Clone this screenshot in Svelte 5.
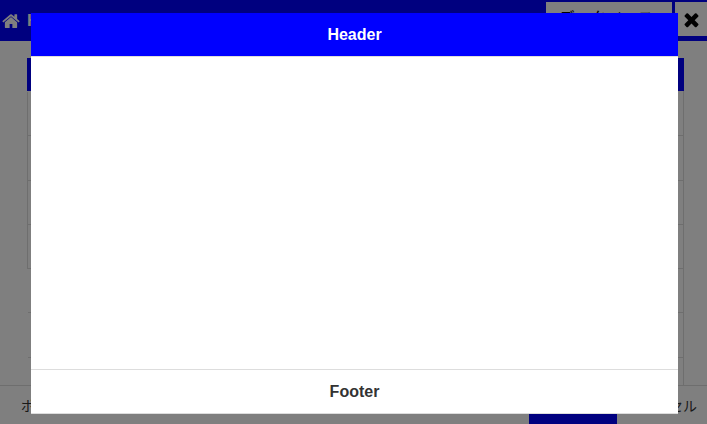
<script>
	const rows = [1, 2, 3, 4, 5, 6];
</script>

<div class="page">
	<div class="topbar">
		<svg class="home" viewBox="0 128 1664 1408" aria-hidden="true">
			<path d="M1408 992v480q0 26-19 45t-45 19h-384v-384h-256v384h-384q-26 0-45-19t-19-45v-480q0-1 .5-3t.5-3l575-474 575 474q1 2 1 6zm223-69l-62 74q-8 9-21 11h-3q-13 0-21-7l-692-577-692 577q-12 8-24 7-13-2-21-11l-62-74q-8-10-7-23.500t11-21.500l719-599q32-26 76-26t76 26l244 204v-195q0-14 9-23t23-9h192q14 0 23 9t9 23v408l219 182q10 8 11 21.500t-7 23.500z" />
		</svg>
		<span class="title">Home</span>
		<button class="group">データベース</button>
		<button class="close" aria-label="閉じる">
			<svg viewBox="0 0 1408 1792" aria-hidden="true">
				<path d="M1298 1322q0 40-28 68l-136 136q-28 28-68 28t-68-28l-294-294-294 294q-28 28-68 28t-68-28l-136-136q-28-28-28-68t28-68l294-294-294-294q-28-28-28-68t28-68l136-136q28-28 68-28t68 28l294 294 294-294q28-28 68-28t68 28l136 136q28 28 28 68t-28 68l-294 294 294 294q28 28 28 68z" />
			</svg>
		</button>
	</div>

	<div class="content">
		<div class="table">
			<div class="thead"></div>
			{#each rows as row}
				<div class="row" class:short={row > 4}></div>
			{/each}
		</div>
	</div>

	<div class="footer">
		<span class="note">ポイント</span>
		<button class="primary">OK</button>
		<span class="cancel">キャンセル</span>
	</div>
</div>

<div class="overlay">
	<div class="modal">
		<div class="modal-header">Header</div>
		<div class="modal-body"></div>
		<div class="modal-footer">Footer</div>
	</div>
</div>

<style>
	:global(body) {
		margin: 0;
		overflow: hidden;
		font-family: "Liberation Sans", "Noto Sans CJK JP", sans-serif;
	}

	.page {
		display: flex;
		flex-direction: column;
		height: 424px;
		background: #fff;
		color: #333;
	}

	/* Top bar */
	.topbar {
		display: flex;
		align-items: flex-start;
		height: 41px;
		flex: none;
		box-sizing: border-box;
		padding-top: 2px;
		background: #00f;
	}

	.home {
		width: 18px;
		height: 15px;
		margin: 11px 0 0 2px;
		fill: #fff;
		flex: none;
	}

	.title {
		margin: 9px 0 0 7px;
		font-size: 17px;
		font-weight: bold;
		color: #fff;
	}

	.topbar button {
		border: 0;
		padding: 0;
		background: #fff;
		font-family: inherit;
	}

	.topbar .group {
		width: 126px;
		height: 34px;
		margin-left: auto;
		padding: 0 6px 4px 0;
		font-size: 16px;
		color: #000;
	}

	.close {
		display: flex;
		align-items: center;
		justify-content: center;
		width: 32px;
		height: 34px;
		margin-left: 3px;
	}

	.close svg {
		width: 17px;
		height: 21px;
		fill: #000;
	}

	/* Table behind the dialog */
	.content {
		flex: 1;
		padding: 17px 23px 0 27px;
	}

	.table {
		height: 100%;
		box-sizing: border-box;
		border-right: 1px solid #ddd;
	}

	.thead {
		height: 33px;
		margin-right: -1px;
		margin-bottom: 1px;
		background: #00f;
	}

	.row {
		height: 44.25px;
		box-sizing: border-box;
		border-bottom: 1px solid #ddd;
		border-left: 1px solid #ddd;
	}

	.row.short {
		border-left: 0;
		margin-left: 1px;
	}

	/* Page footer */
	.footer {
		display: flex;
		height: 39px;
		flex: none;
		box-sizing: border-box;
		align-items: center;
		padding: 0 10px 0 21px;
		border-top: 1px solid #ddd;
		font-size: 14px;
	}

	.primary {
		align-self: flex-end;
		width: 88px;
		height: 32px;
		margin-left: auto;
		border: 0;
		background: #00f;
		color: #fff;
	}

	.cancel {
		width: 70px;
		margin-left: 10px;
		text-align: right;
	}

	/* Dialog */
	.overlay {
		position: fixed;
		inset: 0;
		display: flex;
		box-sizing: border-box;
		padding: 13px 29px 10px 31px;
		background: rgba(0, 0, 0, 0.5);
	}

	.modal {
		display: flex;
		flex: 1;
		flex-direction: column;
		background: #fff;
		border-bottom: 1px solid #ddd;
	}

	.modal-header {
		height: 43px;
		flex: none;
		line-height: 43px;
		text-align: center;
		font-size: 16px;
		font-weight: bold;
		color: #fff;
		background: #00f;
		border-bottom: 1px solid #ddd;
	}

	.modal-body {
		flex: 1;
	}

	.modal-footer {
		height: 43px;
		flex: none;
		line-height: 43px;
		text-align: center;
		font-size: 16px;
		font-weight: bold;
		color: #333;
		border-top: 1px solid #ddd;
	}
</style>
